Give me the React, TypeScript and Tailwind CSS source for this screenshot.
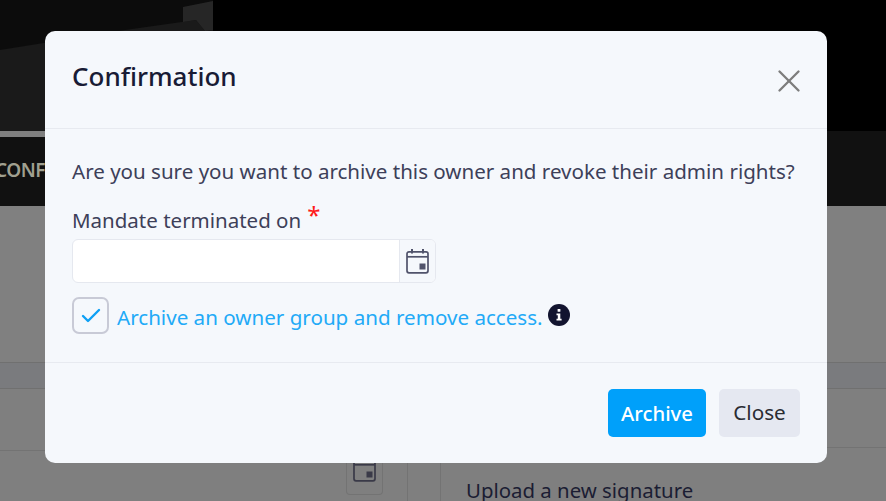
import { Check, X } from 'lucide-react';

function CalendarIcon({ className }: { className?: string }) {
  return (
    <svg viewBox="0 0 23 25" fill="none" className={className}>
      <rect x="1" y="2.8" width="21" height="21" rx="2" stroke="currentColor" strokeWidth="1.7" />
      <path d="M1 7.8h21" stroke="currentColor" strokeWidth="1.7" />
      <path d="M6 0v4.5M17 0v4.5" stroke="currentColor" strokeWidth="2" />
      <rect x="13.5" y="14.5" width="6" height="6" fill="currentColor" />
    </svg>
  );
}

function InfoIcon() {
  return (
    <svg viewBox="0 0 22 22" className="w-[22px] h-[22px]">
      <circle cx="11" cy="11" r="11" fill="#12142f" />
      <rect x="9.6" y="5" width="2.8" height="2.8" rx="0.6" fill="#fff" />
      <path d="M8.5 9.5h3.8v5.2h1.3v1.8H8.5v-1.8h1.3v-3.4H8.5z" fill="#fff" />
    </svg>
  );
}

export default function App() {
  return (
    <div className="relative w-[886px] h-[501px] overflow-hidden bg-[#7f7f7f] font-['Noto_Sans',sans-serif] flex flex-col">
      {/* Dimmed page behind the dialog */}
      <svg viewBox="0 0 886 131" className="w-[886px] h-[131px] shrink-0 bg-black">
        <rect width="213" height="131" fill="#0c0c0c" />
        <polygon points="0,50 125,30 196,20 205,31 213,30 213,131 0,131" fill="#1a1a1a" />
        <polygon points="183,7 213,1 213,30 205,31 196,20 183,22" fill="#262626" />
      </svg>
      <div className="h-[75px] bg-[#111111] shrink-0 overflow-hidden">
        <div className="h-[6px] w-[46px] bg-[#808080]" />
        <div className="h-[69px] flex items-center">
          <span className="text-[19px] font-semibold tracking-[-0.5px] text-[#a0a090] -ml-[5px] -mt-[2px]">CONFIG</span>
        </div>
      </div>
      <div className="h-[156px] bg-[#808080] shrink-0" />
      <div className="h-[27px] border-y border-[#707070] bg-[#7a7b7e] shrink-0" />
      <div className="flex-1 flex min-h-0">
        <div className="w-[408px] border-r border-[#737373]">
          <div className="h-[62px] border-b border-[#737373]" />
          <div className="pl-[346px]">
            <div className="w-[37px] h-[44px] border-x border-b border-[#737373] rounded-b pt-[6px] flex justify-center">
              <CalendarIcon className="w-[23px] h-[25px] text-[#3a3a48]" />
            </div>
          </div>
        </div>
        <div className="w-[33px] border-r border-[#737373]" />
        <div className="flex-1">
          <div className="h-[59px] border-b border-[#737373]" />
          <div className="pl-[25px] pt-[31px]">
            <span className="block text-[20.4px] leading-[22px] whitespace-nowrap text-[#1b1d33]">Upload a new signature</span>
          </div>
        </div>
      </div>

      {/* Dialog */}
      <div className="absolute left-[45px] top-[31px] w-[782px] h-[432px] bg-[#f5f8fc] rounded-[10px] flex flex-col">
        <div className="h-[98px] border-b border-[#e7eaf0] flex justify-between pl-[27px] pr-[19px] shrink-0">
          <h2 className="text-[26px] leading-[32px] mt-[29px] font-medium text-[#181b35]">Confirmation</h2>
          <X className="w-[38px] h-[38px] mt-[31px] text-[#7d7d7d]" strokeWidth={1.5} />
        </div>
        <div className="h-[234px] border-b border-[#e7eaf0] pl-[27px] pt-[28px] shrink-0">
          <p className="text-[20.55px] leading-[28px] whitespace-nowrap text-[#3d4059]">
            Are you sure you want to archive this owner and revoke their admin rights?
          </p>
          <label className="flex items-start text-[20.5px] leading-[28px] text-[#3d4059] mt-[21px]">
            Mandate terminated on
            <span className="text-[#ff1a1a] text-[24px] leading-[24px] ml-[6px] -mt-[3px]">*</span>
          </label>
          <div className="flex w-[364px] h-[44px] mt-[5px] border border-[#e5e8ef] rounded-[6px] bg-white overflow-hidden">
            <div className="flex-1" />
            <div className="w-[36px] bg-[#f5f8fc] border-l border-[#e5e8ef] flex items-center justify-center">
              <CalendarIcon className="w-[23px] h-[25px] text-[#50536b]" />
            </div>
          </div>
          <div className="flex items-center mt-[14px]">
            <div className="w-[37px] h-[37px] rounded-[7px] border-2 border-[#c8cad6] flex items-center justify-center">
              <Check className="w-[24px] h-[24px] text-[#0ea0f5]" strokeWidth={2.4} />
            </div>
            <span className="text-[20.6px] leading-[28px] whitespace-nowrap text-[#22aaf7] ml-[8px] mt-[3px]">
              Archive an owner group and remove access.
            </span>
            <span className="ml-[5px] -mt-[1px]"><InfoIcon /></span>
          </div>
        </div>
        <div className="flex-1 flex justify-end items-start gap-[13px] pt-[26px] pr-[27px]">
          <button className="h-[48px] w-[98px] rounded-[5px] bg-[#00a0fa] text-white text-[20.3px] font-medium">Archive</button>
          <button className="h-[48px] w-[81px] rounded-[5px] bg-[#e5e8f1] text-[#2a2c33] text-[20.7px]">Close</button>
        </div>
      </div>
    </div>
  );
}
